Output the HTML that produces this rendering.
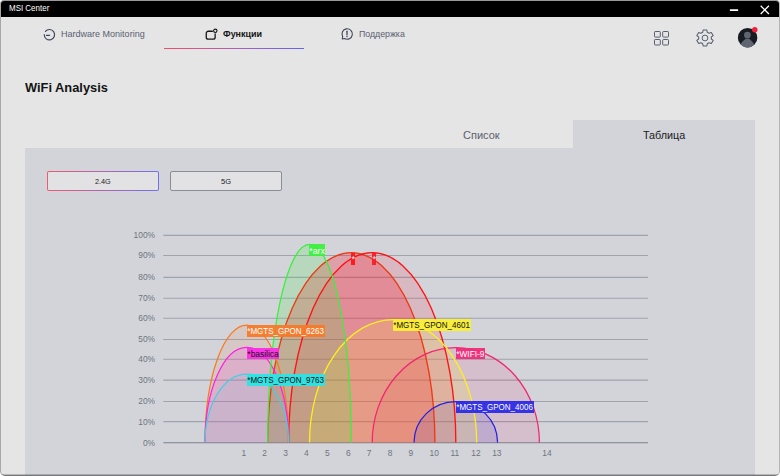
<!DOCTYPE html>
<html lang="ru"><head><meta charset="utf-8"><title>MSI Center</title>
<style>
html,body{margin:0;padding:0}
body{width:780px;height:476px;overflow:hidden;background:#fff;font-family:"Liberation Sans","DejaVu Sans",sans-serif;position:relative}
#win{position:absolute;left:0;top:0;width:778px;height:474px;border:1px solid #a8a8a8;border-right-color:#b4b4b4;border-top-color:#9a9a9a;border-bottom-color:#787878;border-radius:4px 4px 5px 5px;background:#e5e5e5;overflow:hidden}
#win>*{position:absolute}
#tb{left:0;top:0;width:778px;height:15.8px;background:#000}
.t{position:absolute;white-space:nowrap;line-height:normal;transform-origin:0 0}
#ul{left:163.2px;top:46.6px;width:139.8px;height:1.3px;background:linear-gradient(90deg,#f0506a,#b060b0 50%,#6264f0)}
#panel{left:24px;top:146.5px;width:729.6px;height:330px;background:#d2d4da}
#tabbg{left:571.8px;top:119px;width:181.8px;height:30px;background:#d2d4da}
#b1{left:45.7px;top:170px;width:112px;height:19.7px;border-radius:2px;background:linear-gradient(90deg,#ef5a6e,#7070f0)}
#b1i{left:46.7px;top:171px;width:110px;height:17.7px;background:#e2e2e5;border-radius:1px}
#b2{left:169px;top:170px;width:110px;height:17.7px;border:1px solid #8b8e95;border-radius:2px;background:#e2e2e5}
.lb{position:absolute;height:11.7px;font-size:9.2px;line-height:12.7px;white-space:nowrap;overflow:hidden}
.lb span{display:inline-block;transform-origin:0 0;padding-left:0.4px}
.star{font-size:5px;line-height:6.5px;text-align:center;height:11.8px}
.star span{padding:0}
#chart{left:-1px;top:-1px;width:780px;height:476px}
#chart>*{position:absolute}
</style></head><body>
<div id="win">
<div id="tb"></div>
<svg style="left:728px;top:3px" width="44" height="12" viewBox="0 0 44 12"><path d="M0.9 6.1h8.2" stroke="#fff" stroke-width="1.6" fill="none"/><path d="M31.7 1.8l8.2 8.2M39.9 1.8l-8.2 8.2" stroke="#fff" stroke-width="1.3" fill="none"/></svg>

<svg style="left:41px;top:26.8px" width="14" height="14" viewBox="0 0 14 14"><path d="M3.4 3.4A5.2 5.2 0 1 1 2.2 6.6" fill="none" stroke="#3f465a" stroke-width="1.15" stroke-linecap="round"/><path d="M4.4 7.300h3.200" stroke="#3f465a" stroke-width="1.15" stroke-linecap="round"/></svg>

<svg style="left:203px;top:27px" width="16" height="14" viewBox="0 0 16 14"><path d="M8.4 3.250H4.250a2 2 0 0 0-2 2v3.900a2 2 0 0 0 2 2h4.900a2 2 0 0 0 2-2V5.800" fill="none" stroke="#161616" stroke-width="1.3" stroke-linecap="round"/><circle cx="11.3" cy="2.800" r="1.700" fill="none" stroke="#161616" stroke-width="1.1"/></svg>
<div id="ul"></div>

<svg style="left:338.600px;top:26.400px" width="14" height="14" viewBox="0 0 14 14"><path d="M2.200 12l.5-2.400A5.200 5.200 0 1 1 4.600 11.500z" fill="none" stroke="#3f465a" stroke-width="1.1" stroke-linejoin="round"/><path d="M7 4.200v3.600" stroke="#3f465a" stroke-width="1.3" stroke-linecap="round"/><circle cx="7" cy="9.600" r=".75" fill="#3f465a"/></svg>

<svg style="left:652px;top:29px" width="18" height="18" viewBox="0 0 18 18"><g fill="none" stroke="#596071" stroke-width="1"><rect x="1.500" y="1.500" width="5.800" height="5.600" rx=".7"/><rect x="9.700" y="1.500" width="5.800" height="5.600" rx=".7"/><rect x="1.500" y="9.500" width="5.800" height="5.500" rx=".7"/><rect x="9.700" y="9.500" width="5.800" height="5.500" rx=".7"/></g></svg>

<svg style="left:692.500px;top:26.100px" width="22" height="22" viewBox="-11 -11 22 22"><g fill="none" stroke="#596071" stroke-width="1"><path d="M-2.11 -5.62 L-1.75 -7.81 L1.75 -7.81 L2.11 -5.62 L3.81 -4.64 L5.89 -5.42 L7.63 -2.39 L5.92 -0.98 L5.92 0.98 L7.63 2.39 L5.89 5.42 L3.81 4.64 L2.11 5.62 L1.75 7.81 L-1.75 7.81 L-2.11 5.62 L-3.81 4.64 L-5.89 5.42 L-7.63 2.39 L-5.92 0.98 L-5.92 -0.98 L-7.63 -2.39 L-5.89 -5.42 L-3.81 -4.64Z" stroke-linejoin="round" transform="scale(1.07,1.02)"/><circle r="2.900"/></g></svg>

<svg style="left:735px;top:25px" width="26" height="24" viewBox="0 0 26 24"><defs><clipPath id="av"><circle cx="11.600" cy="11.700" r="9.750"/></clipPath></defs><circle cx="11.600" cy="11.700" r="9.750" fill="#181b22"/><g clip-path="url(#av)" fill="#5f6671"><circle cx="11.400" cy="9.100" r="3.400"/><path d="M4.300 22C4.300 16.500 7.800 14.600 9.500 12.800L13.300 12.800C15 14.600 18.500 16.500 18.500 22z"/></g><circle cx="18.800" cy="3.700" r="2.750" fill="#f0203c"/></svg>

<div id="tabbg"></div>
<div id="panel"></div>
<div id="b1"></div><div id="b1i"></div>
<div id="b2"></div>
<div style="left:0;top:473px;width:778px;height:1px;background:rgba(0,0,0,.2)"></div>

<div id="chart">
<svg width="780" height="476" viewBox="0 0 780 476" style="left:0;top:0">
<line x1="163.3" y1="442.7" x2="648" y2="442.7" stroke="#7d828c" stroke-width="1.1"/>
<line x1="163.3" y1="421.6" x2="648" y2="421.6" stroke="#9fa3ac" stroke-width="1.1"/>
<line x1="163.3" y1="401.5" x2="648" y2="401.5" stroke="#9fa3ac" stroke-width="1.1"/>
<line x1="163.3" y1="380.1" x2="648" y2="380.1" stroke="#9fa3ac" stroke-width="1.1"/>
<line x1="163.3" y1="359.3" x2="648" y2="359.3" stroke="#9fa3ac" stroke-width="1.1"/>
<line x1="163.3" y1="339.5" x2="648" y2="339.5" stroke="#9fa3ac" stroke-width="1.1"/>
<line x1="163.3" y1="318.3" x2="648" y2="318.3" stroke="#9fa3ac" stroke-width="1.1"/>
<line x1="163.3" y1="298.3" x2="648" y2="298.3" stroke="#9fa3ac" stroke-width="1.1"/>
<line x1="163.3" y1="277.4" x2="648" y2="277.4" stroke="#9fa3ac" stroke-width="1.1"/>
<line x1="163.3" y1="255.5" x2="648" y2="255.5" stroke="#9fa3ac" stroke-width="1.1"/>
<line x1="163.3" y1="235.4" x2="648" y2="235.4" stroke="#9fa3ac" stroke-width="1.1"/>
<path d="M267.7,442.6 A83.6,190.0 0 0 1 434.9,442.6" fill="#ff0a1e" fill-opacity="0.26"/>
<path d="M288.6,442.6 A83.6,190.0 0 0 1 455.8,442.6" fill="#ff1428" fill-opacity="0.14"/>
<path d="M372.2,442.6 A83.6,94.9 0 0 1 539.4,442.6" fill="#f0266e" fill-opacity="0.12"/>
<path d="M414.0,442.6 A41.8,41.0 0 0 1 497.6,442.6" fill="#2222e0" fill-opacity="0.12"/>
<path d="M309.5,442.6 A83.6,123.1 0 0 1 476.7,442.6" fill="#fdf020" fill-opacity="0.15"/>
<path d="M205.0,442.6 A41.8,117.5 0 0 1 288.6,442.6" fill="#f8843a" fill-opacity="0.13"/>
<path d="M205.0,442.6 A41.8,95.3 0 0 1 288.6,442.6" fill="#ff22e2" fill-opacity="0.15"/>
<path d="M205.0,442.6 A41.8,68.4 0 0 1 288.6,442.6" fill="#3fd2e2" fill-opacity="0.1"/>
<path d="M267.7,442.6 A41.8,198.3 0 0 1 351.3,442.6" fill="#3cf03c" fill-opacity="0.18"/>
<path d="M267.7,442.6 A83.6,190.0 0 0 1 434.9,442.6" fill="none" stroke="#ec3a14" stroke-width="1.35"/>
<path d="M288.6,442.6 A83.6,190.0 0 0 1 455.8,442.6" fill="none" stroke="#ff1212" stroke-width="1.35"/>
<path d="M372.2,442.6 A83.6,94.9 0 0 1 539.4,442.6" fill="none" stroke="#f0266e" stroke-width="1.25"/>
<path d="M414.0,442.6 A41.8,41.0 0 0 1 497.6,442.6" fill="none" stroke="#2222e0" stroke-width="1.25"/>
<path d="M309.5,442.6 A83.6,123.1 0 0 1 476.7,442.6" fill="none" stroke="#fdf020" stroke-width="1.25"/>
<path d="M205.0,442.6 A41.8,117.5 0 0 1 288.6,442.6" fill="none" stroke="#f87a22" stroke-width="1.25"/>
<path d="M205.0,442.6 A41.8,95.3 0 0 1 288.6,442.6" fill="none" stroke="#ff22e2" stroke-width="1.25"/>
<path d="M205.0,442.6 A41.8,68.4 0 0 1 288.6,442.6" fill="none" stroke="#3fd2e2" stroke-width="1.25"/>
<path d="M267.7,442.6 A41.8,198.3 0 0 1 351.3,442.6" fill="none" stroke="#3cf03c" stroke-width="1.25"/>
</svg>
<div class="lb" style="left:351.2px;top:253px;height:12px;width:3.7px;background:rgba(255,20,20,0.94);color:#fff"><span>*</span></div>
<div class="lb" style="left:372.1px;top:253px;height:12px;width:3.7px;background:rgba(251,28,36,0.94);color:#fff"><span>*</span></div>
<div class="lb" style="left:456.0px;top:348px;height:11px;width:29px;background:rgba(240,42,120,0.94);color:#fff"><span style="transform:scaleX(0.899)">*WIFI-9</span></div>
<div class="lb" style="left:456.0px;top:401px;height:12px;width:77.5px;background:rgba(42,42,230,0.94);color:#fff"><span style="transform:scaleX(0.871)">*MGTS_GPON_4006</span></div>
<div class="lb" style="left:393.3px;top:319px;height:12px;width:77.5px;background:rgba(250,240,50,0.94);color:#111"><span style="transform:scaleX(0.871)">*MGTS_GPON_4601</span></div>
<div class="lb" style="left:247.0px;top:325px;height:12px;width:77.5px;background:rgba(245,122,40,0.94);color:#fff"><span style="transform:scaleX(0.871)">*MGTS_GPON_6263</span></div>
<div class="lb" style="left:247.0px;top:348px;height:11px;width:32.3px;background:rgba(251,45,230,0.94);color:#111"><span style="transform:scaleX(0.915)">*basilica</span></div>
<div class="lb" style="left:247.0px;top:374px;height:12px;width:77.5px;background:rgba(43,228,228,0.94);color:#111"><span style="transform:scaleX(0.871)">*MGTS_GPON_9763</span></div>
<div class="lb" style="left:309.3px;top:244px;height:12px;width:15.7px;background:rgba(61,240,61,0.94);color:#fff"><span style="transform:scaleX(0.95);position:relative;top:1px">*arx</span></div>
</div>
<div class="t" style="top:2.21px;font-size:8.5px;color:#fff;left:7.70px;transform:scaleX(0.937);">MSI Center</div>
<div class="t" style="top:28.07px;font-size:9.2px;color:#596073;left:60.40px;transform:scaleX(0.981);">Hardware Monitoring</div>
<div class="t" style="top:28.07px;font-size:9.2px;color:#141414;font-weight:bold;left:221.50px;transform:scaleX(0.974);">Функции</div>
<div class="t" style="top:28.07px;font-size:9.2px;color:#596073;left:357.80px;transform:scaleX(0.955);">Поддержка</div>
<div class="t" style="top:79.70px;font-size:12.6px;color:#141414;font-weight:bold;left:24.20px;transform:scaleX(1.020);">WiFi Analysis</div>
<div class="t" style="top:127.83px;font-size:10.8px;color:#5b6170;left:462.10px;transform:scaleX(1.021);">Список</div>
<div class="t" style="top:127.83px;font-size:10.8px;color:#1a1a1a;left:642.20px;transform:scaleX(0.999);">Таблица</div>
<div class="t" style="top:175.94px;font-size:7.8px;color:#222;left:94.00px;transform:scaleX(0.929);">2.4G</div>
<div class="t" style="top:175.94px;font-size:7.8px;color:#222;left:220.30px;transform:scaleX(0.961);">5G</div>
<div class="t" style="top:436.60px;font-size:8.4px;color:#6f747d;left:141.89px;transform:scaleX(1.0);">0%</div>
<div class="t" style="top:415.50px;font-size:8.4px;color:#6f747d;left:137.23px;transform:scaleX(1.0);">10%</div>
<div class="t" style="top:395.40px;font-size:8.4px;color:#6f747d;left:137.23px;transform:scaleX(1.0);">20%</div>
<div class="t" style="top:374.00px;font-size:8.4px;color:#6f747d;left:137.23px;transform:scaleX(1.0);">30%</div>
<div class="t" style="top:353.20px;font-size:8.4px;color:#6f747d;left:137.23px;transform:scaleX(1.0);">40%</div>
<div class="t" style="top:333.40px;font-size:8.4px;color:#6f747d;left:137.23px;transform:scaleX(1.0);">50%</div>
<div class="t" style="top:312.20px;font-size:8.4px;color:#6f747d;left:137.23px;transform:scaleX(1.0);">60%</div>
<div class="t" style="top:292.20px;font-size:8.4px;color:#6f747d;left:137.23px;transform:scaleX(1.0);">70%</div>
<div class="t" style="top:271.25px;font-size:8.4px;color:#6f747d;left:137.23px;transform:scaleX(1.0);">80%</div>
<div class="t" style="top:249.40px;font-size:8.4px;color:#6f747d;left:137.23px;transform:scaleX(1.0);">90%</div>
<div class="t" style="top:229.30px;font-size:8.4px;color:#6f747d;left:132.58px;transform:scaleX(1.0);">100%</div>
<div class="t" style="top:446.70px;font-size:8.4px;color:#6f747d;left:240.40px;">1</div>
<div class="t" style="top:446.70px;font-size:8.4px;color:#6f747d;left:261.30px;">2</div>
<div class="t" style="top:446.70px;font-size:8.4px;color:#6f747d;left:282.20px;">3</div>
<div class="t" style="top:446.70px;font-size:8.4px;color:#6f747d;left:303.10px;">4</div>
<div class="t" style="top:446.70px;font-size:8.4px;color:#6f747d;left:324.00px;">5</div>
<div class="t" style="top:446.70px;font-size:8.4px;color:#6f747d;left:344.90px;">6</div>
<div class="t" style="top:446.70px;font-size:8.4px;color:#6f747d;left:365.80px;">7</div>
<div class="t" style="top:446.70px;font-size:8.4px;color:#6f747d;left:386.70px;">8</div>
<div class="t" style="top:446.70px;font-size:8.4px;color:#6f747d;left:407.60px;">9</div>
<div class="t" style="top:446.70px;font-size:8.4px;color:#6f747d;left:428.50px;">10</div>
<div class="t" style="top:446.70px;font-size:8.4px;color:#6f747d;left:449.40px;">11</div>
<div class="t" style="top:446.70px;font-size:8.4px;color:#6f747d;left:470.30px;">12</div>
<div class="t" style="top:446.70px;font-size:8.4px;color:#6f747d;left:491.20px;">13</div>
<div class="t" style="top:446.70px;font-size:8.4px;color:#6f747d;left:541.30px;">14</div>
</div>
</body></html>
